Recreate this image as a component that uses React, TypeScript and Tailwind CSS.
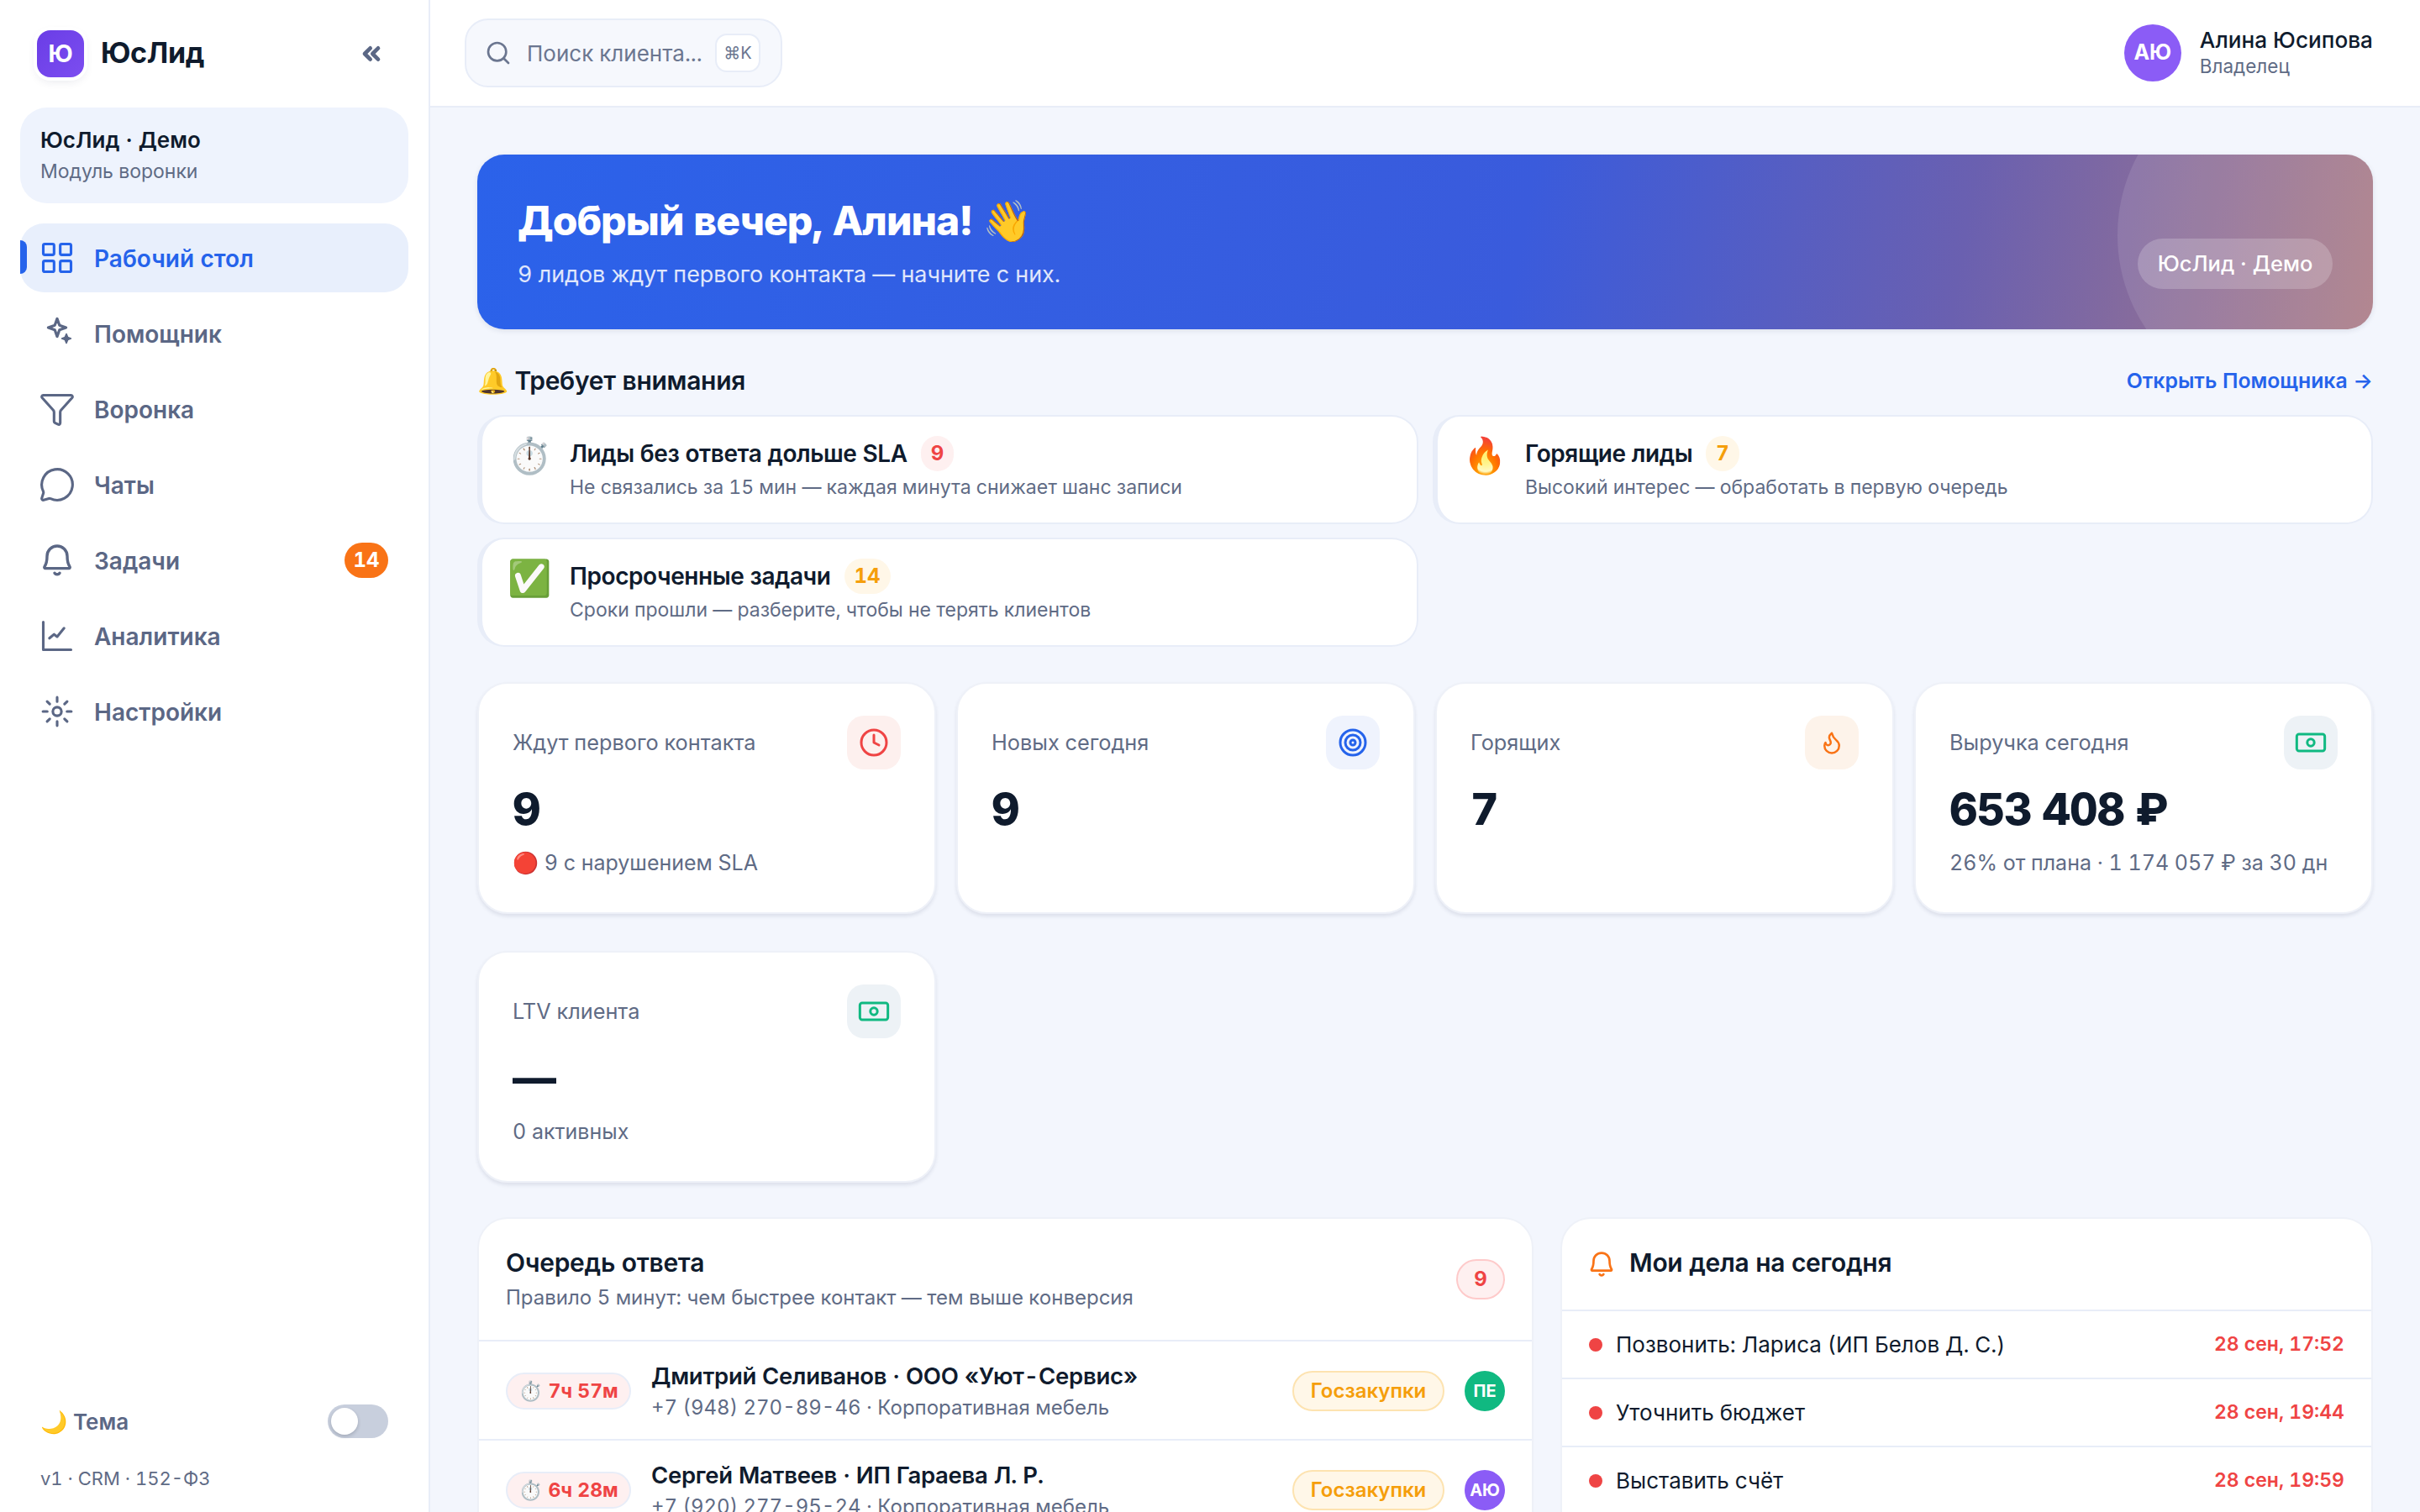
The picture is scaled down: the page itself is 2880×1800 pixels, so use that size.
import React from "react";
import { ChevronsLeft, LayoutGrid, Funnel, MessageCircle, Search, Clock, Target, Flame } from "lucide-react";

const Sparkle = () => (
  <svg width="48" height="48" viewBox="0 0 24 24" fill="none" stroke="currentColor" strokeWidth="1.6" strokeLinejoin="round" strokeLinecap="round" className="-mx-[2px]">
    <path d="M12 3.2 L13.4 7.1 L17.3 8.5 L13.4 9.9 L12 13.8 L10.6 9.9 L6.7 8.5 L10.6 7.1 Z" />
    <path d="M17.5 12.3 L18.3 14.2 L20.2 15 L18.3 15.8 L17.5 17.7 L16.7 15.8 L14.8 15 L16.7 14.2 Z" fill="currentColor" strokeWidth="0.8" />
  </svg>
);
const ChartI = () => (
  <svg width="44" height="44" viewBox="0 0 24 24" fill="none" stroke="currentColor" strokeWidth="1.7" strokeLinecap="round" strokeLinejoin="round">
    <path d="M3 3v18h18" />
    <path d="M7 13.5l3-2.5 2 1.5L16.5 7" />
  </svg>
);
const Gear = () => (
  <svg width="44" height="44" viewBox="0 0 24 24" fill="none" stroke="currentColor" strokeWidth="1.7" strokeLinecap="round">
    <circle cx="12" cy="12" r="2.8" />
    <path d="M12 2.800v2.800M12 18.400v2.800M2.800 12h2.800M18.400 12h2.800M5.500 5.500l1.700 1.700M16.800 16.800l1.700 1.700M5.500 18.500l1.700-1.700M16.800 7.200l1.700-1.700" />
  </svg>
);
const BellI = ({ size = 48, cls = "" }: { size?: number; cls?: string }) => (
  <svg width={size} height={size} viewBox="0 0 24 24" fill="none" stroke="currentColor" strokeWidth="1.7" strokeLinecap="round" strokeLinejoin="round" className={cls}>
    <path d="M6 9.5a6 6 0 0 1 12 0c0 3.6.9 5.4 1.5 6.3.3.5 0 1-.5 1H5c-.5 0-.8-.5-.5-1C5.100 14.900 6 13.100 6 9.500Z" />
    <path d="M10.500 19.600a1.800 1.800 0 0 0 3 0" />
  </svg>
);
const Money = () => (
  <svg width="40" height="40" viewBox="0 0 24 24" fill="none" stroke="#10b981" strokeWidth="1.8">
    <rect x="2" y="6" width="20" height="12" rx="1.600" />
    <circle cx="12" cy="12" r="2.500" />
  </svg>
);

const nav = [
  { label: "Рабочий стол", icon: <LayoutGrid size={44} strokeWidth={1.7} />, active: true },
  { label: "Помощник", icon: <Sparkle /> },
  { label: "Воронка", icon: <Funnel size={44} strokeWidth={1.7} /> },
  { label: "Чаты", icon: <MessageCircle size={44} strokeWidth={1.7} /> },
  { label: "Задачи", icon: <BellI cls="-mx-[2px]" />, badge: "14" },
  { label: "Аналитика", icon: <ChartI /> },
  { label: "Настройки", icon: <Gear /> },
];

function Sidebar() {
  return (
    <aside className="w-[512px] shrink-0 h-full bg-white border-r-2 border-[#e8edf8] flex flex-col px-6">
      <div className="flex items-center h-[128px] pl-5 pr-7">
        <div className="w-14 h-14 rounded-2xl bg-gradient-to-br from-[#6a3de6] to-[#7c4df0] shadow-[0_0_0_4px_#ffffff,0_4px_12px_rgba(30,41,80,0.12)] flex items-center justify-center text-white font-bold text-[28px]">Ю</div>
        <div className="ml-5 -mt-[2px] text-[34px] font-bold text-[#0f1b2d] tracking-[-0.01em] leading-none">ЮсЛид</div>
        <ChevronsLeft className="ml-auto text-[#5b6785]" size={32} strokeWidth={3.5} />
      </div>
      <div className="h-[114px] rounded-[32px] bg-[#eef3fd] px-6 flex flex-col justify-center">
        <div className="text-[26px] leading-[38px] font-semibold text-[#0f1b2d]">ЮсЛид · Демо</div>
        <div className="text-[23px] leading-[36px] text-[#5f6b85]">Модуль воронки</div>
      </div>
      <nav className="mt-6 flex flex-col gap-2">
        {nav.map((n) => (
          <div key={n.label} className={`relative h-[82px] rounded-[28px] flex items-center pl-[22px] pr-6 ${n.active ? "bg-[#e8effc] text-[#2563eb]" : "text-[#5b6785]"}`}>
            {n.active && <span className="absolute left-0 top-5 w-2 h-10 rounded-r-lg bg-[#2563eb]" />}
            {n.icon}
            <span className="ml-[22px] mt-[2px] text-[28px] font-semibold">{n.label}</span>
            {n.badge && <span className="ml-auto w-[52px] h-[42px] rounded-full bg-[#f97316] text-white text-[24px] font-bold flex items-center justify-center">{n.badge}</span>}
          </div>
        ))}
      </nav>
      <div className="mt-auto pb-[22px] pl-6 pr-6">
        <div className="flex items-center justify-between h-10">
          <span className="text-[26px] font-semibold text-[#5b6785]">🌙 Тема</span>
          <span className="w-[72px] h-10 rounded-full bg-[#c8cfdd] p-1 flex items-center">
            <span className="w-8 h-8 rounded-full bg-white shadow-[0_2px_4px_rgba(15,23,42,0.2)]" />
          </span>
        </div>
        <div className="mt-[30px] text-[22px] leading-9 text-[#5f6b85]">v1 · CRM · 152-ФЗ</div>
      </div>
    </aside>
  );
}

function Header() {
  return (
    <header className="h-[128px] shrink-0 bg-white border-b-2 border-[#e8edf8] flex items-center justify-between pl-[41px] pr-[56px]">
      <div className="w-[378px] h-[82px] rounded-[28px] bg-[#f6f8fd] border-2 border-[#e8edf8] flex items-center pl-[22px] pr-6">
        <Search size={32} className="text-[#6b7690]" strokeWidth={2} />
        <span className="ml-[18px] text-[26px] text-[#6b7690] whitespace-nowrap">Поиск клиента...</span>
        <span className="ml-auto w-[54px] h-[46px] rounded-[14px] bg-white border-2 border-[#e8edf8] text-[20px] text-[#6b7690] flex items-center justify-center">⌘K</span>
      </div>
      <div className="flex items-center gap-[22px]">
        <div className="w-[68px] h-[68px] rounded-full bg-[#8b5cf6] text-white font-bold text-[25px] flex items-center justify-center">АЮ</div>
        <div className="pb-[3px]">
          <div className="text-[26.2px] leading-[34px] font-medium text-[#0f1b2d]">Алина Юсипова</div>
          <div className="text-[22.5px] leading-[28px] text-[#5f6b85]">Владелец</div>
        </div>
      </div>
    </header>
  );
}

function Banner() {
  return (
    <div className="relative overflow-hidden h-[208px] rounded-[32px] p-12 flex items-end justify-between bg-[linear-gradient(100deg,#2b62ea_0%,#3a5bdc_55%,#6a60b0_78%,#aa7a84_100%)] shadow-[0_2px_6px_rgba(30,41,80,0.1)]">
      <div className="absolute w-[400px] h-[400px] rounded-full bg-white/10 -right-24 -top-[104px]" />
      <div className="relative">
        <div className="text-[48px] leading-[64px] font-extrabold text-white tracking-[-0.02em]">Добрый вечер, Алина! 👋</div>
        <div className="mt-[13px] text-[26.9px] leading-9 text-white/85">9 лидов ждут первого контакта — начните с них.</div>
      </div>
      <div className="relative w-[232px] h-[60px] rounded-full bg-white/20 text-white text-[25.5px] font-medium flex items-center justify-center">ЮсЛид · Демо</div>
    </div>
  );
}

function Alert({ emoji, title, count, sub, tone }: { emoji: string; title: string; count: string; sub: string; tone: string }) {
  return (
    <div className="h-[130px] rounded-[32px] bg-white border-2 border-l-[6px] border-[#e8edf8] flex pl-[30px] pr-8 pt-5">
      <div className="w-[74px] text-[42px] leading-[52px] shrink-0">{emoji}</div>
      <div>
        <div className="flex items-center h-[44px] mt-[2px]">
          <span className="text-[28px] font-semibold text-[#0f1b2d] tracking-[-0.015em]">{title}</span>
          <span className={`ml-4 h-[42px] min-w-[38px] px-3 rounded-full text-[24px] font-bold flex items-center justify-center ${tone}`}>{count}</span>
        </div>
        <div className="text-[23px] leading-9 text-[#5f6b85]">{sub}</div>
      </div>
    </div>
  );
}

function Stat({ label, value, sub, icon, tone }: { label: string; value: string; sub?: string; icon: React.ReactNode; tone: string }) {
  return (
    <div className="h-[276px] rounded-[36px] bg-white border-2 border-[#eef1f8] shadow-[0_3px_4px_rgba(30,41,80,0.1)] pl-10 pr-10 pt-[38px]">
      <div className="flex items-center justify-between">
        <span className="text-[25.3px] text-[#5f6b85]">{label}</span>
        <span className={`w-16 h-16 rounded-[20px] flex items-center justify-center ${tone}`}>{icon}</span>
      </div>
      <div className="mt-[14px] text-[52px] leading-[68px] font-extrabold text-[#0f1b2d] tracking-[-0.02em]">{value}</div>
      {sub && <div className="mt-[11px] text-[25px] leading-9 text-[#5f6b85] whitespace-nowrap">{sub}</div>}
    </div>
  );
}

const leads = [
  { t: "7ч 57м", n: "Дмитрий Селиванов · ООО «Уют-Сервис»", s: "+7 (948) 270-89-46 · Корпоративная мебель", a: "ПЕ", c: "bg-[#10b981]" },
  { t: "6ч 28м", n: "Сергей Матвеев · ИП Гараева Л. Р.", s: "+7 (920) 277-95-24 · Корпоративная мебель", a: "АЮ", c: "bg-[#8b5cf6]" },
];

function Queue() {
  return (
    <div className="rounded-t-[36px] bg-white border-x-2 border-t-2 border-[#eef1f8]">
      <div className="h-[146px] flex items-center justify-between pl-8 pr-8 border-b-2 border-[#e8edf8]">
        <div>
          <div className="text-[30px] leading-10 font-semibold text-[#0f1b2d] tracking-[-0.01em]">Очередь ответа</div>
          <div className="mt-1 text-[24px] leading-9 text-[#5f6b85]">Правило 5 минут: чем быстрее контакт — тем выше конверсия</div>
        </div>
        <span className="w-[58px] h-12 rounded-full bg-[#fef0f0] border-2 border-[#fecaca] text-[#ef4444] text-[24px] font-bold flex items-center justify-center">9</span>
      </div>
      {leads.map((l) => (
        <div key={l.t} className="h-[118px] pt-[2px] flex items-center pl-8 pr-8 border-b-2 border-[#e8edf8]">
          <span className="w-[149px] h-[44px] rounded-full bg-[#fef0f0] border-2 border-[#e8edf8] text-[#ef4444] text-[23px] font-bold flex items-center justify-center whitespace-nowrap">⏱️ {l.t}</span>
          <div className="ml-6 min-w-0">
            <div className="text-[27.5px] leading-10 font-semibold text-[#0f1b2d] tracking-[-0.01em]">{l.n}</div>
            <div className="text-[24px] leading-9 text-[#5f6b85]">{l.s}</div>
          </div>
          <span className="ml-auto w-[181px] h-12 rounded-full bg-[#fff7e8] border-2 border-[#fde3b0] text-[#f59e0b] text-[24px] font-semibold flex items-center justify-center">Госзакупки</span>
          <span className={`ml-6 w-12 h-12 rounded-full ${l.c} text-white text-[20px] font-bold flex items-center justify-center`}>{l.a}</span>
        </div>
      ))}
    </div>
  );
}

const todos = [
  { n: "Позвонить: Лариса (ИП Белов Д. С.)", d: "28 сен, 17:52" },
  { n: "Уточнить бюджет", d: "28 сен, 19:44" },
  { n: "Выставить счёт", d: "28 сен, 19:59" },
];

function Todos() {
  return (
    <div className="rounded-t-[36px] bg-white border-x-2 border-t-2 border-[#eef1f8]">
      <div className="h-[110px] pb-1 flex items-center pl-7 pr-8 border-b-2 border-[#e8edf8]">
        <BellI size={38} cls="text-[#f97316] mt-1" />
        <span className="ml-[14px] text-[30px] font-semibold text-[#0f1b2d] tracking-[-0.01em]">Мои дела на сегодня</span>
      </div>
      {todos.map((t) => (
        <div key={t.n} className="h-[81px] flex items-center pl-8 pr-8 border-b-2 border-[#e8edf8]">
          <span className="w-4 h-4 rounded-full bg-[#ef4444]" />
          <span className="ml-4 text-[26px] text-[#0f1b2d]">{t.n}</span>
          <span className="ml-auto text-[23px] font-semibold text-[#ef4444]">{t.d}</span>
        </div>
      ))}
    </div>
  );
}

export default function App() {
  return (
    <div className="flex w-[2880px] h-[1800px] overflow-hidden bg-[#f3f6fd] tabular-nums font-['Inter','Noto_Sans',sans-serif]">
      <Sidebar />
      <div className="flex-1 min-w-0 flex flex-col">
        <Header />
        <main className="flex-1 min-h-0 overflow-hidden px-14 pt-14">
          <Banner />
          <div className="mt-[41px] flex items-center justify-between h-10">
            <span className="text-[30px] font-semibold text-[#0f1b2d] tracking-[-0.01em]">🔔 Требует внимания</span>
            <span className="mt-[2px] text-[24.8px] font-semibold text-[#2563eb]">Открыть Помощника →</span>
          </div>
          <div className="mt-[21px] grid grid-cols-[1120px_1fr] gap-x-[17px] gap-y-4">
            <Alert emoji="⏱️" title="Лиды без ответа дольше SLA" count="9" sub="Не связались за 15 мин — каждая минута снижает шанс записи" tone="bg-[#fef0f0] text-[#ef4444]" />
            <Alert emoji="🔥" title="Горящие лиды" count="7" sub="Высокий интерес — обработать в первую очередь" tone="bg-[#fff7e8] text-[#f59e0b]" />
            <Alert emoji="✅" title="Просроченные задачи" count="14" sub="Сроки прошли — разберите, чтобы не терять клиентов" tone="bg-[#fff7e8] text-[#f59e0b]" />
          </div>
          <div className="mt-[42px] grid grid-cols-4 gap-x-6 gap-y-[44px]">
            <Stat label="Ждут первого контакта" value="9" sub="🔴 9 с нарушением SLA" tone="bg-[#fdf0ee]" icon={<Clock size={36} className="text-[#ef4444]" strokeWidth={2} />} />
            <Stat label="Новых сегодня" value="9" tone="bg-[#eff3fd]" icon={<Target size={36} className="text-[#2563eb]" strokeWidth={2} />} />
            <Stat label="Горящих" value="7" tone="bg-[#fdf3ea]" icon={<Flame size={30} className="text-[#f97316]" strokeWidth={2} />} />
            <Stat label="Выручка сегодня" value="653 408 ₽" sub="26% от плана · 1 174 057 ₽ за 30 дн" tone="bg-[#edf2f6]" icon={<Money />} />
            <Stat label="LTV клиента" value="—" sub="0 активных" tone="bg-[#edf2f6]" icon={<Money />} />
          </div>
          <div className="mt-[41px] grid grid-cols-[1.3fr_1fr] gap-8">
            <Queue />
            <Todos />
          </div>
        </main>
      </div>
    </div>
  );
}
